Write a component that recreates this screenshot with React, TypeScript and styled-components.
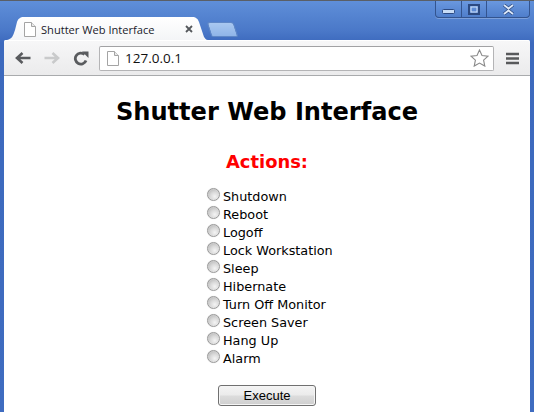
import React from 'react'
import styled, { createGlobalStyle } from 'styled-components'

const actions = ['Shutdown', 'Reboot', 'Logoff', 'Lock Workstation', 'Sleep', 'Hibernate', 'Turn Off Monitor', 'Screen Saver', 'Hang Up', 'Alarm']

const Global = createGlobalStyle`
  html, body { margin: 0; padding: 0; width: 534px; height: 412px; overflow: hidden; background: #fff; }
`

const Window = styled.div`
  position: relative;
  width: 534px;
  height: 412px;
  overflow: hidden;
  box-sizing: border-box;
  padding: 1px 4px 0;
  background: linear-gradient(#5f8fd9 0, #4a78c8 30px, #3c69bd 42px, #3f6cc0 100%);
  border-top: 1px solid #5a5f66;
  display: flex;
  flex-direction: column;
`

const TabStrip = styled.div`
  height: 23px;
  margin-top: 15px;
  margin-left: 3px;
  display: flex;
  align-items: flex-end;
  flex: none;
`

const Tab = styled.div`
  width: 201px;
  height: 23px;
  box-sizing: border-box;
  padding: 1px 15px 0 17px;
  display: flex;
  align-items: center;
  background: linear-gradient(#ffffff, #f4f5f7);
  clip-path: path('M0 23 C5 22 6 19 8 13 L10 5 C11 2 13 0 17 0 L185 0 C189 0 191 2 192 5 L196 17 C197 21 199 23 201 23 Z');
  color: #1a1a2a;
`

const TabTitle = styled.span`
  flex: 1;
  margin-left: 5px;
  font-family: "Open Sans", "Noto Sans", sans-serif;
  font-size: 11.1px;
  white-space: nowrap;
`

const NewTab = styled.div`
  width: 25px;
  height: 13px;
  margin: 0 0 3px 1px;
  background: linear-gradient(#a9c8f0, #8fb4e8);
  border: 1px solid #5f87c6;
  border-radius: 3px 3px 2px 2px;
  transform: skewX(18deg);
`

const Toolbar = styled.div`
  height: 36px;
  flex: none;
  box-sizing: border-box;
  display: flex;
  align-items: center;
  padding: 1px 11px 0 11px;
  background: linear-gradient(#f7f7f8, #ebebec);
  border-radius: 2px 2px 0 0;
  border-bottom: 1px solid #a9abad;
  box-shadow: inset 0 1px 0 #fff;
`

const NavButton = styled.div`
  width: 29px;
  height: 20px;
  display: flex;
  align-items: center;
  justify-content: flex-start;
  flex: none;
`

const Omnibox = styled.div`
  flex: 1;
  height: 25px;
  box-sizing: border-box;
  margin: 0 12px 0 -3px;
  padding: 0 4px 0 7px;
  display: flex;
  align-items: center;
  background: #fff;
  border: 1px solid #b4b4b6;
  border-top-color: #a2a2a4;
  border-radius: 2px;
`

const Url = styled.span`
  flex: 1;
  margin-left: 6px;
  font: 13.5px "Open Sans", "Noto Sans", sans-serif;
  color: #111;
`

const Page = styled.main`
  flex: 1;
  background: #fff;
  font-family: "DejaVu Sans", Verdana, sans-serif;
  color: #000;
  text-align: center;
  padding-top: 21px;
`

const Title = styled.h1`
  margin: 0;
  font-size: 24.1px;
  line-height: 30px;
  font-weight: 700;
`

const Subtitle = styled.h2`
  margin: 23px 0 0;
  font-size: 17.9px;
  line-height: 24px;
  font-weight: 700;
  color: #f00;
`

const Choices = styled.form`
  display: flex;
  flex-direction: column;
  align-items: flex-start;
  margin: 14px 0 0 202px;
`

const Choice = styled.label`
  height: 18px;
  display: flex;
  align-items: center;
  font-size: 12.8px;
  line-height: 18px;
`

const Radio = styled.input.attrs({ type: 'radio', name: 'action' })`
  appearance: none;
  width: 13px;
  height: 13px;
  margin: -5px 3px 0 1px;
  border-radius: 50%;
  border: 1px solid #9a9a9a;
  background: radial-gradient(circle at 62% 68%, #f4f4f4 0, #d8d8d8 45%, #a8a8a8 100%);
  box-shadow: inset 0 0 1px #fff, 0 0 1px #d0d0d0;
`

const Execute = styled.button`
  display: block;
  margin: 17px auto 0;
  width: 98px;
  height: 21px;
  padding: 0;
  border: 1px solid #707070;
  border-radius: 3px;
  background: linear-gradient(#f4f4f4 0, #ebebeb 48%, #dcdcdc 52%, #cfcfcf 100%);
  box-shadow: inset 0 0 0 1px #f5f5f5;
  font: 13px "Liberation Sans", Arial, sans-serif;
  color: #000;
`

const Controls = styled.div`
  position: absolute;
  top: 0;
  right: 4px;
  height: 17px;
  box-sizing: border-box;
  display: flex;
  border: 1px solid #33548f;
  border-top: none;
  border-radius: 0 0 4px 4px;
  background: linear-gradient(#6a98df, #4f7ecb);
  box-shadow: 0 1px 0 rgba(255, 255, 255, 0.25);
`

const Control = styled.div<{ $w: number; $low?: boolean }>`
  width: ${p => p.$w}px;
  display: flex;
  align-items: center;
  justify-content: center;
  flex: none;
  padding-top: ${p => (p.$low ? '5px' : '0')};
  box-sizing: border-box;
  & + & { border-left: 1px solid #33548f; }
`

const PageIcon = ({ size = 16 }) => (
  <svg width={size * 0.8} height={size} viewBox="0 0 12 15" style={{ flex: 'none' }}>
    <path d="M.5.5h7l4 4v10H.5z" fill="#fff" stroke="#a4a4a4" />
    <path d="M7.5.5v4h4" fill="#e9e9e9" stroke="#a4a4a4" />
  </svg>
)

const App = () => (
  <Window>
    <Global />
    <Controls>
      <Control $w={25} $low>
        <svg width="13" height="6" viewBox="0 0 13 6"><rect x=".5" y=".5" width="12" height="4" rx="1" fill="#c8dcf6" stroke="#2c4a82" /></svg>
      </Control>
      <Control $w={25}>
        <svg width="12" height="11" viewBox="0 0 12 11"><rect x="1" y="1" width="10" height="9" fill="none" stroke="#2c4a82" strokeWidth="2" /><rect x="3" y="3" width="6" height="5" fill="none" stroke="#d4e3f8" /></svg>
      </Control>
      <Control $w={43}>
        <svg width="13" height="11" viewBox="0 0 13 11"><path d="M2 1l4.500 3.500L11 1M2 10l4.500-3.500L11 10" fill="none" stroke="#2c4a82" strokeWidth="3.400" /><path d="M2 1l4.500 3.500L11 1M2 10l4.500-3.500L11 10" fill="none" stroke="#dce8f9" strokeWidth="1.800" /></svg>
      </Control>
    </Controls>
    <TabStrip>
      <Tab>
        <PageIcon size={15} />
        <TabTitle>Shutter Web Interface</TabTitle>
        <svg width="8" height="8" viewBox="0 0 8 8"><path d="M1 1l6 6M7 1L1 7" stroke="#55585c" strokeWidth="1.800" /></svg>
      </Tab>
      <NewTab />
    </TabStrip>
    <Toolbar>
      <NavButton>
        <svg width="16" height="12" viewBox="0 0 16 12"><path d="M15.500 6H3M7.500 1L2 6l5.500 5" fill="none" stroke="#595b5e" strokeWidth="2.600" /></svg>
      </NavButton>
      <NavButton>
        <svg width="16" height="12" viewBox="0 0 16 12"><path d="M.5 6H13M8.500 1L14 6l-5.500 5" fill="none" stroke="#c9cacb" strokeWidth="2.600" /></svg>
      </NavButton>
      <NavButton>
        <svg width="16" height="15" viewBox="0 0 16 15"><path d="M13 9.500A5.500 5.500 0 1 1 11.500 3.500" fill="none" stroke="#595b5e" strokeWidth="2.800" /><path d="M9 .5h6.500V7z" fill="#595b5e" /></svg>
      </NavButton>
      <Omnibox>
        <PageIcon size={15} />
        <Url>127.0.0.1</Url>
        <svg width="19" height="18" viewBox="0 0 19 18"><path d="M9.500 1l2.500 5.500 6 .7-4.400 4 1.200 5.900-5.300-3-5.300 3 1.200-5.900L1 7.200l6-.7z" fill="#fff" stroke="#8a8a8a" strokeWidth="1.100" /></svg>
      </Omnibox>
      <svg width="13" height="13" viewBox="0 0 13 13"><path d="M0 2h13M0 6.500h13M0 11h13" stroke="#58595b" strokeWidth="2.300" /></svg>
    </Toolbar>
    <Page>
      <Title>Shutter Web Interface</Title>
      <Subtitle>Actions:</Subtitle>
      <Choices>
        {actions.map(a => (
          <Choice key={a}><Radio />{a}</Choice>
        ))}
      </Choices>
      <Execute type="button">Execute</Execute>
    </Page>
  </Window>
)

export default App
